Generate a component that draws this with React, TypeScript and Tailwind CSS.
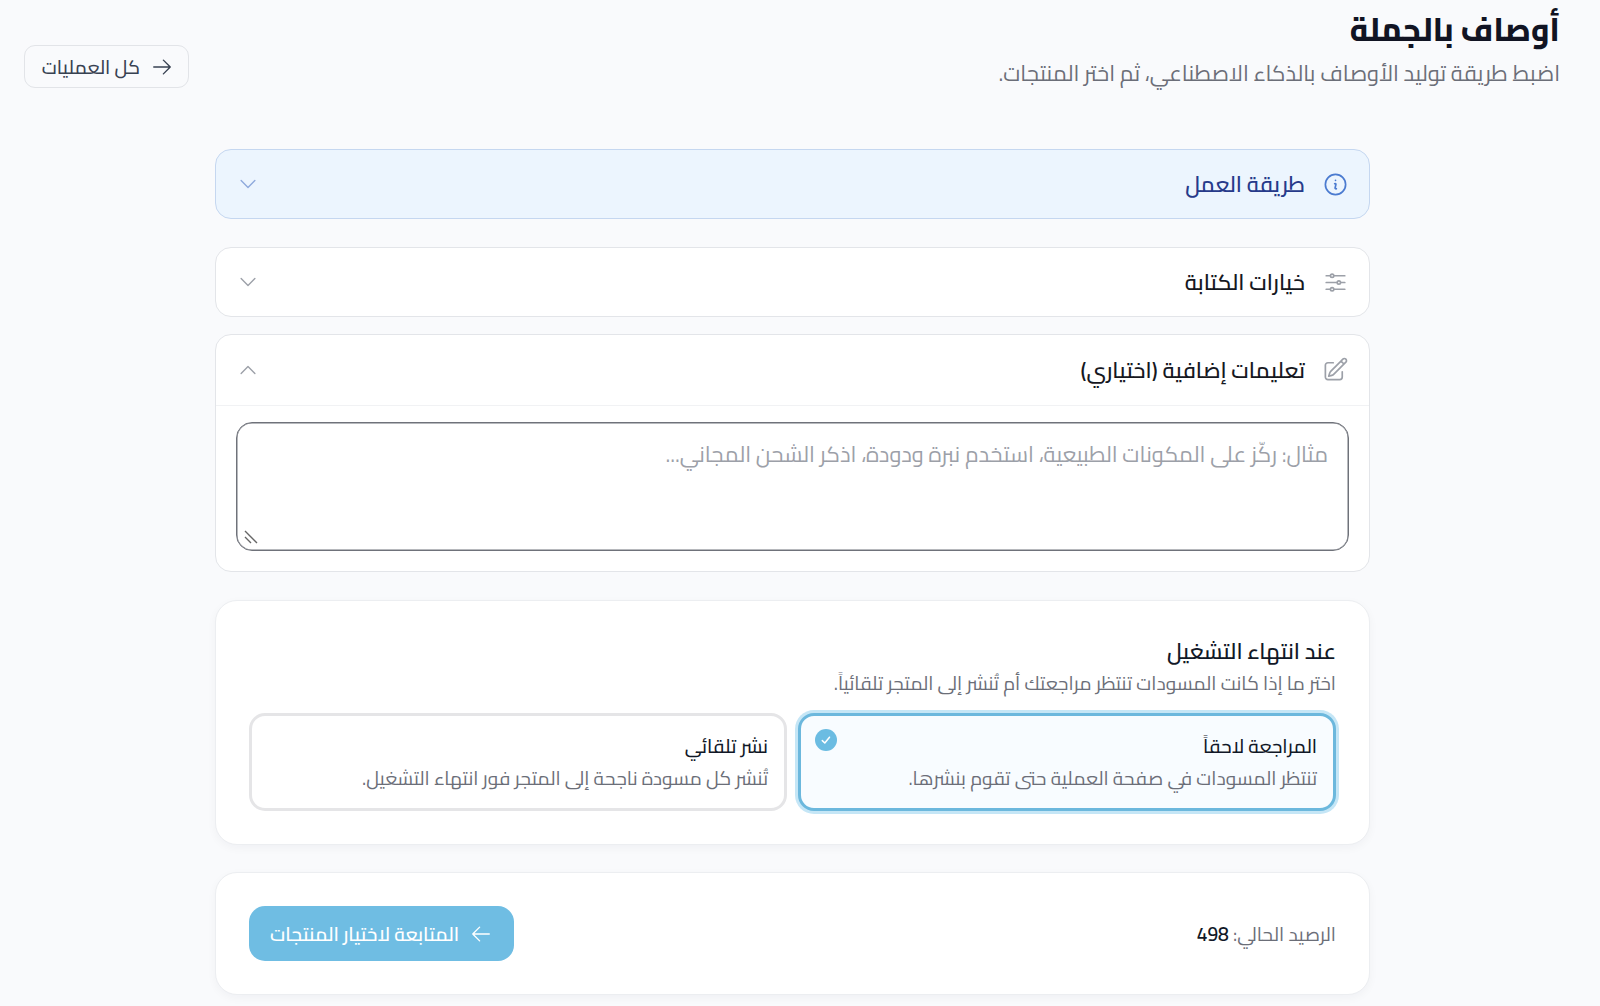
import type { ReactNode } from 'react';
import {
  HiOutlineAdjustmentsHorizontal,
  HiOutlineArrowLeft,
  HiOutlineArrowRight,
  HiOutlineChevronDown,
  HiOutlineChevronUp,
  HiOutlineInformationCircle,
  HiOutlinePencilSquare,
} from 'react-icons/hi2';

interface PanelProps {
  icon: ReactNode;
  title: string;
  tone?: 'info' | 'plain';
  open?: boolean;
  children?: ReactNode;
}

function Panel({ icon, title, tone = 'plain', open = false, children }: PanelProps) {
  const info = tone === 'info';
  const Chevron = open ? HiOutlineChevronUp : HiOutlineChevronDown;

  return (
    <section
      className={`rounded-2xl border ${
        info ? 'border-[#c5d7f0] bg-[#ecf5fe]' : 'border-[#e3e5e9] bg-white'
      }`}
    >
      <button
        className={`flex w-full items-center justify-between px-5 ${open ? 'h-[70px] pb-px' : 'h-[68px]'}`}
      >
        <span className="flex items-center gap-[17px]">
          <span className={info ? 'text-[#4b7bd0]' : 'text-[#9ca0a8]'}>{icon}</span>
          <span
            className={`text-[21.8px] font-semibold leading-[34px] ${
              info ? 'text-[#263a8a]' : 'text-[#16181f]'
            }`}
          >
            {title}
          </span>
        </span>
        <Chevron
          className={`ml-px h-[22px] w-[22px] ${info ? 'text-[#8ea9dc]' : 'text-[#9ca0a8]'}`}
        />
      </button>
      {open && children}
    </section>
  );
}

interface OptionProps {
  title: string;
  description: string;
  selected?: boolean;
}

function Option({ title, description, selected = false }: OptionProps) {
  return (
    <button
      className={`relative flex h-[98px] flex-col items-start rounded-2xl border-[3px] px-4 pt-[14px] ${
        selected
          ? 'border-[#6cb8dd] bg-[#f8fcff] ring-[3px] ring-[#c5e6f6]'
          : 'border-[#e5e5e7] bg-white'
      }`}
    >
      <span className="text-[19.1px] font-medium leading-[33px] text-[#111827]">{title}</span>
      <span className="text-[19.1px] leading-[31px] text-[#6b6e78]">{description}</span>
      {selected && (
        <span className="absolute left-[14px] top-[13px] flex h-[22px] w-[22px] items-center justify-center rounded-full bg-[#6bbce2] text-white">
          <svg
            viewBox="0 0 12 12"
            className="h-3 w-3"
            fill="none"
            stroke="currentColor"
            strokeWidth="1.5"
            strokeLinecap="round"
            strokeLinejoin="round"
          >
            <path d="M2.3 6.6 4.8 9 9.5 3.2" />
          </svg>
        </span>
      )}
    </button>
  );
}

export default function App() {
  return (
    <div dir="rtl" className="h-[1006px] overflow-hidden bg-[#f9fafc] font-['Cairo',sans-serif]">
      {/* Page header */}
      <header className="flex h-[149px] items-start justify-between pl-6 pr-10">
        <div>
          <h1 className="origin-right scale-x-[0.942] pb-px text-[33px] font-extrabold leading-[58px] text-[#111423]">
            أوصاف بالجملة
          </h1>
          <p className="text-[21.8px] leading-[28px] text-[#6b6e78]">
            اضبط طريقة توليد الأوصاف بالذكاء الاصطناعي، ثم اختر المنتجات.
          </p>
        </div>
        <button className="mt-[45px] flex h-[43px] w-[165px] items-center gap-[11px] rounded-[11px] border border-[#e2e4e8] px-[15px] text-[#374151]">
          <HiOutlineArrowRight className="h-[22px] w-[22px] shrink-0" />
          <span className="whitespace-nowrap text-[19.1px] font-medium leading-8">كل العمليات</span>
        </button>
      </header>

      <main className="ml-[215px] mr-[230px] flex w-[1155px] flex-col">
        <Panel
          tone="info"
          icon={<HiOutlineInformationCircle className="h-[27px] w-[27px]" />}
          title="طريقة العمل"
        />

        <div className="mt-7 flex flex-col gap-[17px]">
          <Panel
            icon={<HiOutlineAdjustmentsHorizontal className="h-[27px] w-[27px]" />}
            title="خيارات الكتابة"
          />
          <Panel
            open
            icon={<HiOutlinePencilSquare className="h-[27px] w-[27px]" />}
            title="تعليمات إضافية (اختياري)"
          >
            <div className="h-[166px] border-t border-[#f1f2f4] px-5 pt-4">
              <div className="relative h-[129px] rounded-2xl border border-[#6f727a] px-5 pt-[14px] shadow-[inset_0_0_0_0.5px_#6f727a]">
                <span className="text-[21.85px] leading-[34px] text-[#9ca0a8]">
                  مثال: ركّز على المكونات الطبيعية، استخدم نبرة ودودة، اذكر الشحن المجاني...
                </span>
                {/* Resize grip */}
                <svg
                  viewBox="0 0 14 14"
                  className="absolute bottom-[6px] left-[7px] h-[14px] w-[14px]"
                  stroke="#666"
                  strokeWidth="1.4"
                >
                  <path d="M1 1 13 13M1 7 7 13" />
                </svg>
              </div>
            </div>
          </Panel>
        </div>

        {/* Publishing mode */}
        <section className="mt-7 h-[245px] rounded-[22px] border border-[#eceef1] bg-white px-[33px] pt-[33px] shadow-[0_3px_10px_rgba(15,23,42,0.04)]">
          <h2 className="text-[21.8px] font-semibold leading-[34px] text-[#111827]">عند انتهاء التشغيل</h2>
          <p className="text-[19.1px] leading-[31px] text-[#6b6e78]">
            اختر ما إذا كانت المسودات تنتظر مراجعتك أم تُنشر إلى المتجر تلقائياً.
          </p>
          <div className="mt-[14px] grid grid-cols-2 gap-[11px]">
            <Option
              selected
              title="المراجعة لاحقاً"
              description="تنتظر المسودات في صفحة العملية حتى تقوم بنشرها."
            />
            <Option
              title="نشر تلقائي"
              description="تُنشر كل مسودة ناجحة إلى المتجر فور انتهاء التشغيل."
            />
          </div>
        </section>

        {/* Balance and continue */}
        <section className="mt-[27px] flex h-[123px] items-center justify-between rounded-[22px] border border-[#eceef1] bg-white px-[33px] shadow-[0_3px_10px_rgba(15,23,42,0.04)]">
          <p className="text-[19.1px] leading-8 text-[#6b6e78]">
            الرصيد الحالي: <span className="font-semibold text-[#111827]">498</span>
          </p>
          <button className="flex h-[55px] w-[265px] items-center gap-[11px] rounded-2xl bg-[#6fbde3] px-[22px] text-white">
            <HiOutlineArrowLeft className="h-[22px] w-[22px] shrink-0" />
            <span className="whitespace-nowrap text-[19.1px] font-semibold leading-8">
              المتابعة لاختيار المنتجات
            </span>
          </button>
        </section>
      </main>
    </div>
  );
}
